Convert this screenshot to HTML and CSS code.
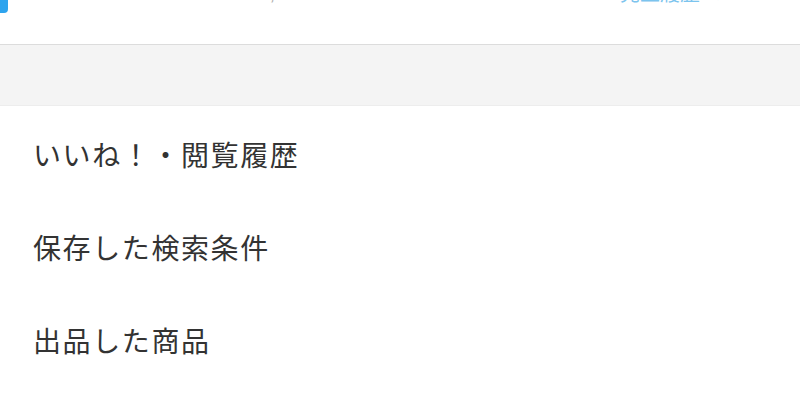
FILE: index.html
```html
<!DOCTYPE html>
<html lang="ja">
<head>
<meta charset="utf-8">
<link rel="stylesheet" href="styles.css">
</head>
<body>
<div class="top">
  <div class="top-row">
    <span class="tab"></span>
    <span class="num num-a">15</span>
    <span class="num num-b">123,000</span>
    <span class="link">売上履歴へ</span>
  </div>
</div>
<div class="band"></div>
<ul class="menu">
  <li class="item">いいね！・閲覧履歴</li>
  <li class="item">保存した検索条件</li>
  <li class="item">出品した商品</li>
  <li class="item">購入した商品</li>
</ul>
</body>
</html>
```
FILE: styles.css
```css
html, body {
  margin: 0;
  padding: 0;
  background: #ffffff;
  overflow: hidden;
}
body {
  width: 800px;
  height: 419px;
  font-family: "Noto Sans CJK JP", "Noto Sans", sans-serif;
  color: #333333;
}
.top {
  height: 44px;
  border-bottom: 1px solid #dcdcdc;
  overflow: hidden;
  background: #ffffff;
}
.top-row {
  display: flex;
  align-items: flex-end;
  height: 30px;
  margin-top: -27px;
}
.tab {
  display: block;
  width: 8px;
  height: 40px;
  background: #2ea4ee;
  border-radius: 0 0 4px 0;
  align-self: flex-start;
}
.num {
  font-family: "Liberation Sans", sans-serif;
  font-size: 20px;
  line-height: 1;
  color: #b0b0b0;
}
.num-a { margin-left: 49px; }
.num-b { margin-left: 157px; }
.link {
  margin-left: auto;
  margin-right: 80px;
  font-size: 20px;
  line-height: 1;
  color: #7cc4ee;
}
.band {
  height: 60px;
  background: #f4f4f4;
  border-bottom: 1px solid #ededed;
}
.menu {
  list-style: none;
  margin: 0;
  padding: 0;
}
.item {
  display: flex;
  align-items: center;
  height: 93px;
  padding-left: 33px;
  padding-top: 3px;
  box-sizing: border-box;
  font-size: 28px;
  font-weight: 400;
  line-height: 1;
  letter-spacing: 1.6px;
  color: #333333;
}
```
